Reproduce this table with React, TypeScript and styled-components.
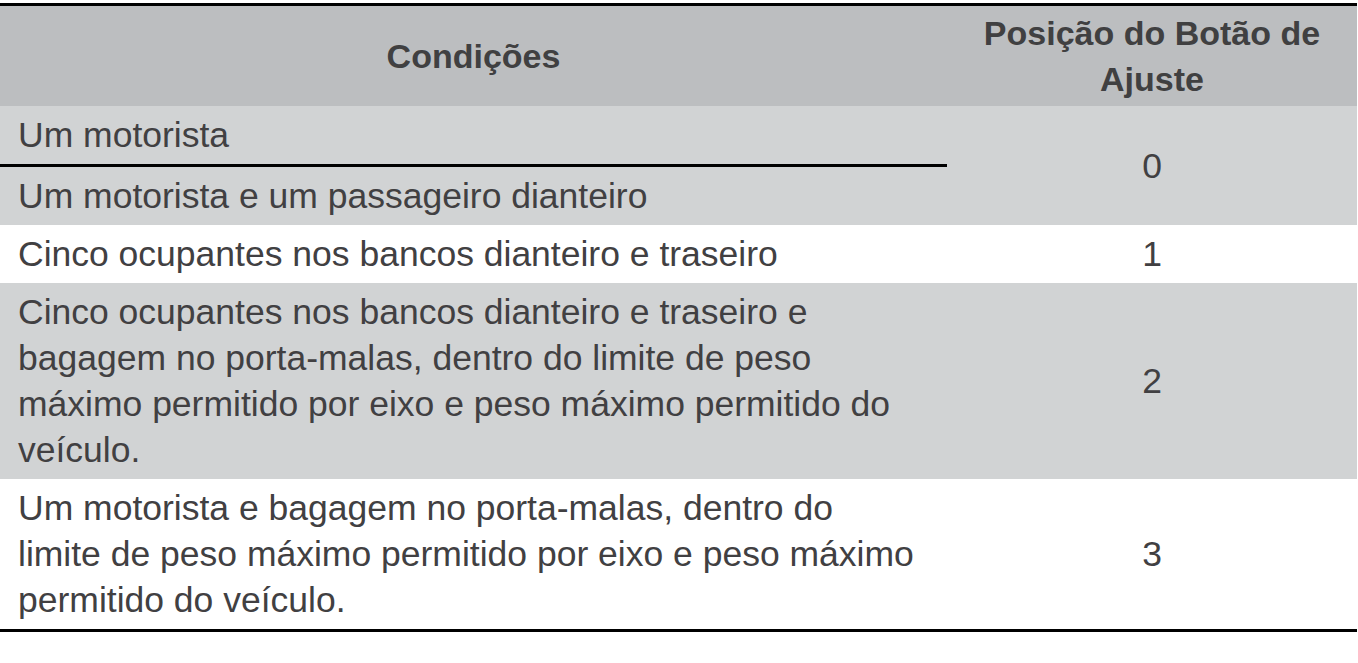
import React from "react";
import styled, { createGlobalStyle } from "styled-components";

const GlobalStyle = createGlobalStyle`
  html, body {
    margin: 0;
    padding: 0;
    background: #ffffff;
  }
  body {
    font-family: "Liberation Sans", Arial, sans-serif;
  }
  th, td {
    box-sizing: border-box;
  }
`;

const Page = styled.div`
  padding-top: 3px;
`;

const Table = styled.table`
  width: 1357px;
  border-collapse: collapse;
  border-top: 3px solid #000000;
  border-bottom: 3px solid #000000;
  table-layout: fixed;
  color: #414042;
`;

const HeadRow = styled.tr`
  background: #bcbec0;
`;

const HeadCell = styled.th<{ $width?: number }>`
  width: ${(p) => (p.$width ? `${p.$width}px` : "auto")};
  padding: 4px 18px;
  font-family: "Liberation Sans", Arial, sans-serif;
  font-weight: 700;
  font-size: 34px;
  line-height: 46px;
  text-align: center;
  vertical-align: middle;
  color: #404041;
`;

const Row = styled.tr<{ $shaded?: boolean }>`
  background: ${(p) => (p.$shaded ? "#d1d3d4" : "#ffffff")};
`;

const Cell = styled.td<{ $rule?: boolean }>`
  padding: 6px 18px;
  font-size: 35.5px;
  line-height: 46px;
  text-align: left;
  vertical-align: middle;
  white-space: nowrap;
  border-bottom: ${(p) => (p.$rule ? "3px solid #000000" : "none")};
`;

const ValueCell = styled.td`
  padding: 6px 18px;
  font-size: 35.5px;
  line-height: 46px;
  text-align: center;
  vertical-align: middle;
`;

export default function App() {
  return (
    <Page>
      <GlobalStyle />
      <Table>
        <thead>
          <HeadRow>
            <HeadCell $width={947}>Condições</HeadCell>
            <HeadCell>
              Posição do Botão de
              <br />
              Ajuste
            </HeadCell>
          </HeadRow>
        </thead>
        <tbody>
          <Row $shaded>
            <Cell $rule>Um motorista</Cell>
            <ValueCell rowSpan={2}>0</ValueCell>
          </Row>
          <Row $shaded>
            <Cell>Um motorista e um passageiro dianteiro</Cell>
          </Row>
          <Row>
            <Cell>Cinco ocupantes nos bancos dianteiro e traseiro</Cell>
            <ValueCell>1</ValueCell>
          </Row>
          <Row $shaded>
            <Cell>
              Cinco ocupantes nos bancos dianteiro e traseiro e
              <br />
              bagagem no porta-malas, dentro do limite de peso
              <br />
              máximo permitido por eixo e peso máximo permitido do
              <br />
              veículo.
            </Cell>
            <ValueCell>2</ValueCell>
          </Row>
          <Row>
            <Cell>
              Um motorista e bagagem no porta-malas, dentro do
              <br />
              limite de peso máximo permitido por eixo e peso máximo
              <br />
              permitido do veículo.
            </Cell>
            <ValueCell>3</ValueCell>
          </Row>
        </tbody>
      </Table>
    </Page>
  );
}
